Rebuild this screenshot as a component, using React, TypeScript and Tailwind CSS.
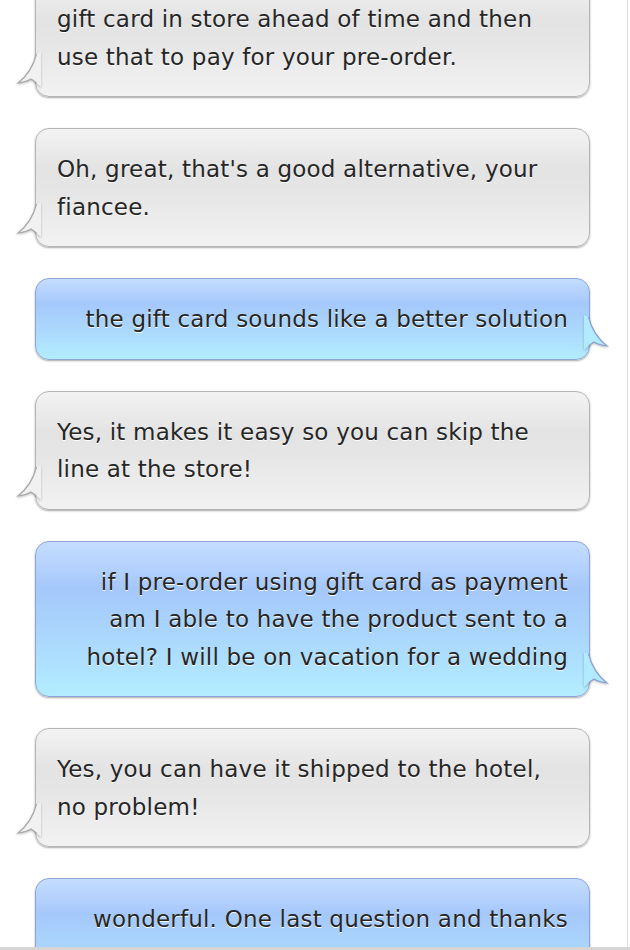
import React from "react";

type Msg = { side: "left" | "right"; lines: string[] };

const msgs: Msg[] = [
  { side: "left", lines: ["gift card in store ahead of time and then", "use that to pay for your pre-order."] },
  { side: "left", lines: ["Oh, great, that's a good alternative, your", "fiancee."] },
  { side: "right", lines: ["the gift card sounds like a better solution"] },
  { side: "left", lines: ["Yes, it makes it easy so you can skip the", "line at the store!"] },
  {
    side: "right",
    lines: [
      "if I pre-order using gift card as payment",
      "am I able to have the product sent to a",
      "hotel? I will be on vacation for a wedding",
    ],
  },
  { side: "left", lines: ["Yes, you can have it shipped to the hotel,", "no problem!"] },
  { side: "right", lines: ["wonderful. One last question and thanks", "for the very helpful"] },
];

function Tail({ side }: { side: "left" | "right" }) {
  const gray = side === "left";
  const fill = gray ? "#f1f1f1" : "#b2ebff";
  const stroke = gray ? "#a8a8a8" : "#8aa0d4";
  return (
    <svg
      width="26"
      height="36"
      viewBox="0 0 26 36"
      className={
        side === "left"
          ? "absolute left-[-20px] bottom-[8px]"
          : "absolute right-[-20px] bottom-[8px] -scale-x-100"
      }
      style={{ filter: "drop-shadow(0 1px 1px rgba(0,0,0,0.25))" }}
    >
      <path d="M25 0 L20.5 2 Q16 20 2 31 Q10 30 15 27 Q18 29 20.5 31 L25 35 Z" fill={fill} />
      <path
        d="M20.5 2 Q16 20 2 31 Q10 30 15 27 Q18 29 20.5 31"
        fill="none"
        stroke={stroke}
        strokeWidth="1.2"
      />
    </svg>
  );
}

function Bubble({ m }: { m: Msg }) {
  const left = m.side === "left";
  return (
    <div
      className={
        "relative rounded-[14px] border px-[21px] pt-[22px] pb-[20px] text-[23px] tracking-[0.2px] leading-[37.5px] text-[#262626] shadow-[0_1px_2px_rgba(0,0,0,0.35)] " +
        (left
          ? "border-[#b4b4b4] bg-[linear-gradient(#f3f3f3_0%,#e3e3e3_35%,#e6e6e6_55%,#f2f2f2_100%)] text-left"
          : "border-[#8ea4d6] bg-[linear-gradient(#c5ddff_0%,#a5c8fb_30%,#aad6fd_60%,#b3edff_100%)] text-right")
      }
      style={{ fontFamily: '"DejaVu Sans", Verdana, sans-serif', textShadow: "0 1px 0 rgba(255,255,255,0.95)" }}
    >
      {m.lines.map((l, i) => (
        <div key={i} className="whitespace-nowrap">
          {l}
        </div>
      ))}
      <Tail side={m.side} />
    </div>
  );
}

export default function App() {
  return (
    <div className="w-[630px] h-[950px] overflow-hidden bg-white flex flex-col">
      <div className="flex-1 min-h-0 overflow-hidden w-[628px] border-r border-[#e2e2e2]">
        <div className="flex flex-col gap-[31px] pl-[35px] pr-[37px] mt-[-22px]">
          {msgs.map((m, i) => (
            <Bubble key={i} m={m} />
          ))}
        </div>
      </div>
      <div className="h-[3px] bg-[#d5d5d5] shrink-0" />
    </div>
  );
}
